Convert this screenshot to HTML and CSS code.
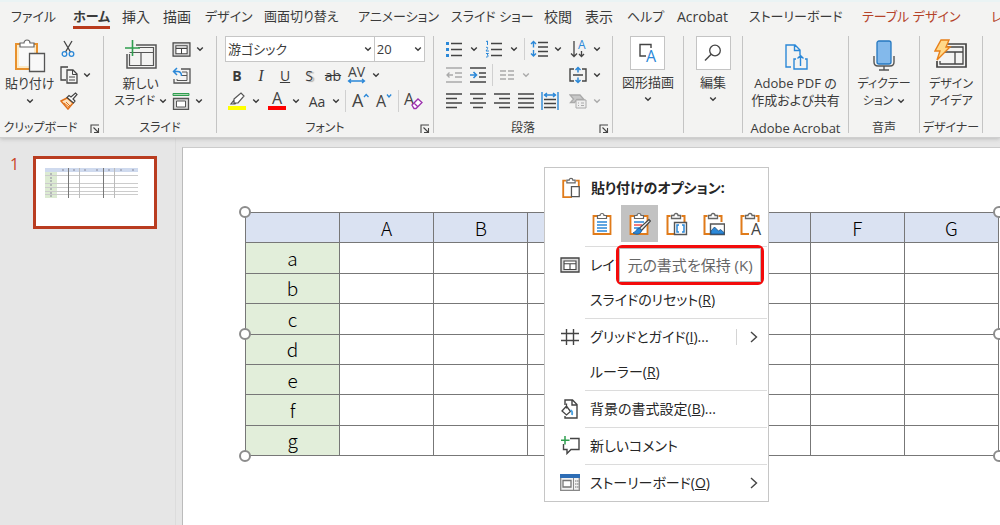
FILE: index.html
```html
<!DOCTYPE html>
<html lang="ja">
<head>
<meta charset="utf-8">
<title>プレゼンテーション</title>
<link rel="stylesheet" href="styles.css">
</head>
<body>
<svg class="defs" aria-hidden="true">
  <symbol id="chev" viewBox="0 0 8 8"><path d="M1.2 2.5 4 5.3 6.8 2.5" fill="none" stroke="currentColor" stroke-width="1.4"/></symbol>
  <symbol id="launch" viewBox="0 0 10 10"><path d="M1 9V1h8M3.500 3.500 8 8M8.500 4v4.500H4" fill="none" stroke="#444" stroke-width="1.100"/></symbol>
  <symbol id="layout" viewBox="0 0 20 16"><path d="M1 1h18v14H1z" fill="#ddd" stroke="#444" stroke-width="1.300"/><path d="M4 4h12v8.500H4zM4 6.800h12M10 6.800v5.700" fill="#fff" stroke="#444" stroke-width="1.100"/></symbol>
  <symbol id="clip" viewBox="0 0 24 24"><path d="M6.500 4H3.500v18h9.500M17.500 4h3v6" fill="none" stroke="#e07b1a" stroke-width="2"/><path d="M7.500 6.500V3.500h2.500a2 2 0 0 1 4 0h2.500v3z" fill="#fff" stroke="#666" stroke-width="1.300"/></symbol>
</svg>

<header class="ribbon">
  <nav class="tabs">
    <button>ファイル</button><button class="active">ホーム</button><button class="kanji">挿入</button><button class="kanji">描画</button><button>デザイン</button><button>画面切り替え</button><button>アニメーション</button><button>スライド ショー</button><button class="kanji">校閲</button><button class="kanji">表示</button><button>ヘルプ</button><button class="kanji">Acrobat</button><button>ストーリーボード</button><button class="context">テーブル デザイン</button><button class="context">レ</button>
  </nav>

  <div class="groups">
    <section class="group">
      <div class="body clipboard">
        <button class="big"><svg width="32" height="34" viewBox="0 0 32 34"><path d="M2 5h21v25H2z" fill="#fdebc8" stroke="#e8912d" stroke-width="2"/><path d="M5 8h15v19H5z" fill="#fafafa"/><path d="M6 8V4h4a3 3 0 0 1 6 0h4v4z" fill="#fff" stroke="#666" stroke-width="1.200"/><path d="M15.500 14.500h15v18h-15z" fill="#f8f8f8" stroke="#555" stroke-width="1.300"/></svg><span>貼り付け</span><svg class="chev"><use href="#chev"/></svg></button>
        <div class="stack">
          <button aria-label="切り取り"><svg width="16" height="18" viewBox="0 0 16 18"><path d="M4 1l6.500 11M12 1 5.500 12" stroke="#444" stroke-width="1.300"/><circle cx="4.500" cy="14" r="2.300" fill="none" stroke="#2b88d8" stroke-width="1.300"/><circle cx="11.500" cy="14" r="2.300" fill="none" stroke="#2b88d8" stroke-width="1.300"/></svg></button>
          <button aria-label="コピー"><svg width="18" height="18" viewBox="0 0 18 18"><path d="M6 14H1V1h7M7 4h6l4 4v9H7z" fill="none" stroke="#444" stroke-width="1.300"/><path d="M12.500 4v4.500H17M9 11h6M9 14h6" fill="none" stroke="#444"/></svg><svg class="chev"><use href="#chev"/></svg></button>
          <button aria-label="書式のコピー"><svg width="18" height="18" viewBox="0 0 18 18"><path d="M1 9l6-3 6 5-5 6z" fill="#fde3c0" stroke="#e0701a" stroke-width="1.500"/><path d="M4 11l5 4M6 10l4 4" stroke="#e0701a"/><path d="M7 5.500l6.500 5.500 1.500-2-2-2L17 2.500 15.500 1 11 5 9 3.500z" fill="#fff" stroke="#444" stroke-width="1.200"/></svg></button>
        </div>
      </div>
      <div class="label">クリップボード<button class="launch" aria-label="クリップボードの詳細"><svg width="10" height="10"><use href="#launch"/></svg></button></div>
    </section>

    <section class="group">
      <div class="body slides">
        <button class="big"><svg width="34" height="34" viewBox="0 0 34 34"><path d="M12 6h20v23H3V15" fill="none" stroke="#555" stroke-width="1.500"/><path d="M14 8.500h15.500v18H5.500V15M5.500 13.500h24M17 13.500v13" fill="none" stroke="#555" stroke-width="1.200"/><path d="M8.500 1v16M1 9h15" stroke="#2f9e4f" stroke-width="1.600"/></svg><span>新しい</span><span class="line kana">スライド<svg class="chev"><use href="#chev"/></svg></span></button>
        <div class="stack">
          <button aria-label="レイアウト"><svg width="19" height="15"><use href="#layout"/></svg><svg class="chev"><use href="#chev"/></svg></button>
          <button aria-label="リセット"><svg width="19" height="17" viewBox="0 0 19 17"><path d="M9 2h9v14H2v-4" fill="none" stroke="#555" stroke-width="1.300"/><path d="M10 5h5v8.500H5V12M9 8.500h6" fill="none" stroke="#555"/><path d="M5 1 1.500 4.500 5 8M2 4.500h3.500c3 0 4 2 4 4.500" fill="none" stroke="#2b88d8" stroke-width="1.500"/></svg></button>
          <button aria-label="セクション"><svg width="18" height="18" viewBox="0 0 18 18"><path d="M1 1.500h16v2H1z" fill="#a8d5b0" stroke="#2f9e4f"/><path d="M1.500 6.500h15v11h-15z" fill="#ddd" stroke="#555" stroke-width="1.300"/><path d="M4.500 9h9v6h-9z" fill="#fff" stroke="#555"/></svg><svg class="chev"><use href="#chev"/></svg></button>
        </div>
      </div>
      <div class="label">スライド</div>
    </section>

    <section class="group">
      <div class="body rows font">
        <div class="combos">
          <label class="combo name"><select aria-label="フォント"><option>游ゴシック</option></select><svg class="chev"><use href="#chev"/></svg></label>
          <label class="combo"><select aria-label="フォント サイズ"><option>20</option></select><svg class="chev"><use href="#chev"/></svg></label>
        </div>
        <div class="row">
          <button class="tool"><b>B</b></button><button class="tool"><i>I</i></button><button class="tool"><u>U</u></button><button class="tool shadow">S</button><button class="tool"><s>ab</s></button>
          <button class="tool" aria-label="文字の間隔"><svg width="20" height="18" viewBox="0 0 20 18"><text class="g14" x="1" y="11">AV</text><path d="M2 15h15M4 13l-2.500 2L4 17M15 13l2.500 2L15 17" fill="none" stroke="#2b88d8" stroke-width="1.300"/></svg></button><button class="drop"><svg class="chev"><use href="#chev"/></svg></button>
        </div>
        <div class="row">
          <button class="tool" aria-label="蛍光ペン"><svg width="20" height="20" viewBox="0 0 20 20"><path d="M1 15h18v4H1z" fill="#ff0"/><path d="M7 8l7-6 3 3-6 7H7zM7 9l-3 4h4l1-1" fill="#fff" stroke="#555" stroke-width="1.200"/></svg></button><button class="drop"><svg class="chev"><use href="#chev"/></svg></button>
          <button class="tool gap" aria-label="フォントの色"><svg width="20" height="20" viewBox="0 0 20 20"><path d="M1 15h18v4H1z" fill="red"/><text class="g16" x="5" y="13">A</text></svg></button><button class="drop"><svg class="chev"><use href="#chev"/></svg></button>
          <button class="tool gap">Aa</button><button class="drop"><svg class="chev"><use href="#chev"/></svg></button>
          <span class="bar"></span>
          <button class="tool" aria-label="拡大"><svg width="19" height="18" viewBox="0 0 19 18"><text class="g18" x="1" y="15">A</text><path d="M13 5l2.200-2.500L17.500 5" fill="none" stroke="#2b88d8" stroke-width="1.300"/></svg></button>
          <button class="tool" aria-label="縮小"><svg width="19" height="18" viewBox="0 0 19 18"><text class="g16" x="1" y="15">A</text><path d="M12 2.500 14 5l2.200-2.500" fill="none" stroke="#2b88d8" stroke-width="1.300"/></svg></button>
          <span class="bar"></span>
          <button class="tool" aria-label="書式のクリア"><svg width="20" height="20" viewBox="0 0 20 20"><text class="g16" x="1" y="14">A</text><path d="M9 14l6-6 4 3.500-6 6H11zM11 12l4 4" fill="#fff" stroke="#9b2fae" stroke-width="1.300"/></svg></button>
        </div>
      </div>
      <div class="label">フォント<button class="launch" aria-label="フォントの詳細"><svg width="10" height="10"><use href="#launch"/></svg></button></div>
    </section>

    <section class="group">
      <div class="body rows para">
        <div class="row">
          <button class="tool" aria-label="箇条書き"><svg width="18" height="18" viewBox="0 0 18 18"><path d="M1 2h3v3H1zM1 8h3v3H1zM1 14h3v3H1z" fill="#2b88d8"/><path d="M6 3.500h11M6 9.500h11M6 15.500h11" stroke="#444" stroke-width="1.400"/></svg></button><button class="drop wide"><svg class="chev"><use href="#chev"/></svg></button>
          <button class="tool" aria-label="段落番号"><svg width="18" height="18" viewBox="0 0 18 18"><path d="M1 1.500 2.500 1v4M1 7.500c2-1 2.500.5 0 3.500h3M1 13.500h2.500L2 15c2 0 1.500 2.500-1 2" fill="none" stroke="#2b88d8"/><path d="M6 3.500h11M6 9.500h11M6 15.500h11" stroke="#444" stroke-width="1.400"/></svg></button><button class="drop wide"><svg class="chev"><use href="#chev"/></svg></button>
          <span class="bar"></span>
          <button class="tool" aria-label="行間"><svg width="19" height="18" viewBox="0 0 19 18"><path d="M3.500 1.500v6M3.500 10v6M1 4l2.500-2.500L6 4M1 13.500 3.500 16 6 13.500" fill="none" stroke="#2b88d8" stroke-width="1.400"/><path d="M8 2.500h10M8 7h10M8 11.500h10M8 16h10" stroke="#444" stroke-width="1.400"/></svg></button><button class="drop"><svg class="chev"><use href="#chev"/></svg></button>
          <span class="fill"></span>
          <button class="tool" aria-label="文字列の方向"><svg width="17" height="19" viewBox="0 0 17 19"><path d="M4 1v15M1 13.500l3 3 3-3M11.500 11v5.500M9 14l2.500 2.500L14 14" fill="none" stroke="#444" stroke-width="1.300"/><text class="g12 blue" x="8" y="9">A</text></svg></button><button class="drop"><svg class="chev"><use href="#chev"/></svg></button>
        </div>
        <div class="row">
          <button class="tool dim" aria-label="インデントを減らす"><svg width="16" height="16" viewBox="0 0 16 16"><path d="M0 1h16M9 6h7M9 10h7M0 15h16M1 8h6M3.500 5.500 1 8l2.500 2.500" fill="none" stroke="currentColor" stroke-width="1.300"/></svg></button>
          <button class="tool" aria-label="インデントを増やす"><svg width="16" height="16" viewBox="0 0 16 16"><path d="M0 1h16M9 6h7M9 10h7M0 15h16" stroke="#444" stroke-width="1.400"/><path d="M0 8h6M3.500 5 6.500 8l-3 3" fill="none" stroke="#2b88d8" stroke-width="1.600"/></svg></button>
          <span class="bar"></span>
          <button class="tool dim" aria-label="段組み"><svg width="14" height="10" viewBox="0 0 14 10"><path d="M0 1h6M0 5h6M0 9h6M8 1h6M8 5h6M8 9h6" stroke="currentColor" stroke-width="1.300"/></svg></button><button class="drop dim"><svg class="chev"><use href="#chev"/></svg></button>
          <span class="fill"></span>
          <button class="tool" aria-label="文字の配置"><svg width="18" height="18" viewBox="0 0 18 18"><path d="M5 3H1v12h4M13 3h4v12h-4M4 9h10" fill="none" stroke="#444" stroke-width="1.400"/><path d="M9 1.500v5M6.500 4 9 1.500 11.500 4M9 11.500v5M6.500 14 9 16.500l2.500-2.500" fill="none" stroke="#2b88d8" stroke-width="1.500"/></svg></button><button class="drop"><svg class="chev"><use href="#chev"/></svg></button>
        </div>
        <div class="row">
          <button class="tool" aria-label="左揃え"><svg width="16" height="16" viewBox="0 0 16 16"><path d="M0 1h16M0 5.500h11M0 10h16M0 14.500h11" stroke="#444" stroke-width="1.400"/></svg></button>
          <button class="tool" aria-label="中央揃え"><svg width="16" height="16" viewBox="0 0 16 16"><path d="M0 1h16M3 5.500h10M0 10h16M3 14.500h10" stroke="#444" stroke-width="1.400"/></svg></button>
          <button class="tool" aria-label="右揃え"><svg width="16" height="16" viewBox="0 0 16 16"><path d="M0 1h16M5 5.500h11M0 10h16M5 14.500h11" stroke="#444" stroke-width="1.400"/></svg></button>
          <button class="tool" aria-label="両端揃え"><svg width="16" height="16" viewBox="0 0 16 16"><path d="M0 1h16M0 5.500h16M0 10h16M0 14.500h16" stroke="#444" stroke-width="1.400"/></svg></button>
          <button class="tool" aria-label="均等割り付け"><svg width="18" height="18" viewBox="0 0 18 18"><path d="M1 0v18M17 0v18M3 3h12M6 1 3.500 3 6 5M12 1l2.500 2L12 5" fill="none" stroke="#2b88d8" stroke-width="1.400"/><path d="M3 7.500h12M3 11.500h12M3 15.500h12" stroke="#444" stroke-width="1.400"/></svg></button>
          <span class="fill"></span>
          <button class="tool dim" aria-label="SmartArt に変換"><svg width="18" height="15" viewBox="0 0 18 15"><path d="M1 1h10l4 4.500H8L5.500 8.500H1.500L4.500 5z" fill="#c8c8c8" stroke="currentColor" stroke-width="1.300"/><path d="M7 6h10v8H7zM9 9h1M12 9h3M9 11.500h1M12 11.500h3" fill="#eee" stroke="currentColor"/></svg></button><button class="drop dim"><svg class="chev"><use href="#chev"/></svg></button>
        </div>
      </div>
      <div class="label">段落<button class="launch" aria-label="段落の詳細"><svg width="10" height="10"><use href="#launch"/></svg></button></div>
    </section>

    <section class="group">
      <div class="body center"><button class="big"><span class="tile"><svg width="18" height="20" viewBox="0 0 18 20"><path d="M7 13H1V1.500h11V5" fill="none" stroke="#444" stroke-width="1.400"/><text class="g16 blue" x="7" y="19">A</text></svg></span><span>図形描画</span><svg class="chev"><use href="#chev"/></svg></button></div>
    </section>

    <section class="group">
      <div class="body center"><button class="big"><span class="tile"><svg width="18" height="18" viewBox="0 0 18 18"><circle cx="11" cy="6.500" r="5.300" fill="none" stroke="#444" stroke-width="1.300"/><path d="M7.200 10.200 1 16.500" stroke="#444" stroke-width="1.400"/></svg></span><span>編集</span><svg class="chev"><use href="#chev"/></svg></button></div>
    </section>

    <section class="group">
      <div class="body center"><button class="big"><svg width="24" height="34" viewBox="0 0 24 34"><path d="M7 28H2V6h9l5 5v5M10.500 6v5.500H16M12 20h-2v10h13V20h-2M16.500 27v-10M13.500 19.500l3-3 3 3" fill="none" stroke="#2b88d8" stroke-width="1.400"/></svg><span>Adobe PDF の</span><span>作成および共有</span></button></div>
      <div class="label latin">Adobe Acrobat</div>
    </section>

    <section class="group">
      <div class="body center"><button class="big kana"><svg width="24" height="34" viewBox="0 0 24 34"><rect x="5" y="2" width="14" height="23" rx="2" fill="#83b9eb" stroke="#2477c0" stroke-width="1.300"/><path d="M2 17v6q0 4 4 4h12q4 0 4-4v-6M12 27v4M7 31h10" fill="none" stroke="#555" stroke-width="1.400"/></svg><span>ディクテー</span><span class="line">ション<svg class="chev"><use href="#chev"/></svg></span></button></div>
      <div class="label">音声</div>
    </section>

    <section class="group">
      <div class="body center"><button class="big kana"><svg width="34" height="34" viewBox="0 0 34 34"><path d="M12 5h20v23H3v-6" fill="none" stroke="#444" stroke-width="1.700"/><path d="M13 8h16v17H6v-3M11 13h18M21 13v12" fill="none" stroke="#444" stroke-width="1.300"/><path d="M7 1h8l-3 7h4L3 21l3-9H1z" fill="#ffd98a" stroke="#e8801a" stroke-width="1.400"/></svg><span>デザイン</span><span>アイデア</span></button></div>
      <div class="label">デザイナー</div>
    </section>
    <section class="group last"></section>
  </div>
</header>

<main class="work">
  <aside class="pane">
    <span class="num">1</span>
    <button class="thumb" aria-label="スライド 1"><svg viewBox="0 0 118 67"><path fill="#cfdaee" d="M9 9h93v4H9z"/><path fill="#dcebd2" d="M9 13h12v26H9z"/><path d="M9 16.500h93M9 24.500h93M9 28.500h93M9 32.500h93M9 35.500h93" stroke="#ccc"/><path d="M32.500 9v30M67.500 9v30" stroke="#777"/><path d="M43.500 9v30M78.500 9v30" stroke="#bbb"/><path d="M26 11h2M37 11h2M48 11h2M60 11h2M72 11h2M84 11h2M96 11h2M14 15h2M14 19h2M14 22h2M14 26h2M14 30h2M14 34h2M14 37h2" stroke="#889"/></svg></button>
  </aside>
  <section class="slide">
    <div class="frame">
      <table>
        <tbody>
          <tr class="cols"><th></th><th>A</th><th>B</th><th>C</th><th>D</th><th>E</th><th>F</th><th>G</th></tr>
          <tr><th>a</th><td></td><td></td><td></td><td></td><td></td><td></td><td></td></tr>
          <tr><th>b</th><td></td><td></td><td></td><td></td><td></td><td></td><td></td></tr>
          <tr><th>c</th><td></td><td></td><td></td><td></td><td></td><td></td><td></td></tr>
          <tr><th>d</th><td></td><td></td><td></td><td></td><td></td><td></td><td></td></tr>
          <tr><th>e</th><td></td><td></td><td></td><td></td><td></td><td></td><td></td></tr>
          <tr><th>f</th><td></td><td></td><td></td><td></td><td></td><td></td><td></td></tr>
          <tr><th>g</th><td></td><td></td><td></td><td></td><td></td><td></td><td></td></tr>
        </tbody>
      </table>
      <i class="handle tl"></i><i class="handle ml"></i><i class="handle bl"></i>
      <i class="handle tr"></i><i class="handle mr"></i><i class="handle br"></i>
    </div>
  </section>

  <div class="menu" role="menu">
    <div class="head"><svg width="22" height="22" viewBox="0 0 24 24"><use href="#clip" width="24" height="24"/><path d="M12.500 10.500h8.500v11h-8.500z" fill="#fff" stroke="#555" stroke-width="1.400"/></svg>貼り付けのオプション:</div>
    <div class="paste">
      <button aria-label="貼り付け先のテーマを使用"><svg width="24" height="24" viewBox="0 0 24 24"><path d="M3.500 4h17v18h-17z" fill="#fff" stroke="#e07b1a" stroke-width="1.800"/><path d="M7.500 6.500V3.500h2.500a2 2 0 0 1 4 0h2.500v3z" fill="#fff" stroke="#666" stroke-width="1.200"/><path d="M7 10h10M7 13h10M7 16h10M7 19h10" stroke="#2b88d8" stroke-width="1.300"/></svg></button>
      <button class="on" aria-label="元の書式を保持"><svg width="24" height="24" viewBox="0 0 24 24"><path d="M3.500 4h17v18h-17z" fill="#fff" stroke="#e07b1a" stroke-width="1.800"/><path d="M7.500 6.500V3.500h2.500a2 2 0 0 1 4 0h2.500v3z" fill="#fff" stroke="#666" stroke-width="1.200"/><path d="M7 10h10M7 16h5" stroke="#2b88d8" stroke-width="1.300"/><path d="M7 13h8" stroke="#e33" stroke-width="1.300"/><path d="M22 7.500 12.500 16l2 2.500L23.500 9z" fill="#eee" stroke="#444" stroke-width="1.200"/><path d="M12.500 16c-3 0-3 4-6.500 5 3 2 8 1.500 8.500-2.500z" fill="#2b88d8" stroke="#1c63a5"/></svg></button>
      <button aria-label="埋め込み"><svg width="24" height="24" viewBox="0 0 24 24"><use href="#clip" width="24" height="24"/><path d="M10.500 10.500h12v12h-12z" fill="#fff" stroke="#555" stroke-width="1.400"/><path d="M15 13h-2v7h2M18 13h2v7h-2" fill="none" stroke="#2b88d8" stroke-width="1.500"/></svg></button>
      <button aria-label="図"><svg width="24" height="24" viewBox="0 0 24 24"><use href="#clip" width="24" height="24"/><path d="M9.500 12h14v10.500h-14z" fill="#fff" stroke="#555" stroke-width="1.400"/><path d="M10 22v-3l3.500-4 4 4 2-1.500 3.500 3V22z" fill="#2b88d8" stroke="#1c4f80" stroke-width=".8"/></svg></button>
      <button aria-label="テキストのみ保持"><svg width="24" height="24" viewBox="0 0 24 24"><use href="#clip" width="24" height="24"/><path d="M11 10h12v13H11z" fill="#fff"/><text class="g16" x="13" y="23">A</text></svg></button>
    </div>
    <hr>
    <button class="item"><svg width="20" height="16"><use href="#layout"/></svg><span>レイア</span></button>
    <button class="item"><i></i><span>スライドのリセット(<u>R</u>)</span></button>
    <hr>
    <button class="item"><svg width="18" height="18" viewBox="0 0 18 18"><path d="M5.500 1v16M12.500 1v16M0 5.500h18M0 12.500h18" stroke="#444" stroke-width="1.400"/></svg><span>グリッドとガイド(<u>I</u>)...</span><em class="split"><svg width="8" height="12" viewBox="0 0 8 12"><path d="M1 1l5.500 5L1 11" fill="none" stroke="#444" stroke-width="1.400"/></svg></em></button>
    <button class="item"><i></i><span>ルーラー(<u>R</u>)</span></button>
    <hr>
    <button class="item"><svg width="18" height="20" viewBox="0 0 18 20"><path d="M4 6V1h7.500L16 5.500V19H4v-2M11 1v5h5" fill="none" stroke="#444" stroke-width="1.400"/><path d="M1 12l4.500-5 4 5.500-4 3.500zM5.500 4.500v5" fill="#fff" stroke="#444" stroke-width="1.300"/><path d="M9.500 11c2 1 2 3 1.500 5" fill="none" stroke="#4ba3e3" stroke-width="1.800"/></svg><span>背景の書式設定(<u>B</u>)...</span></button>
    <hr>
    <button class="item"><svg width="19" height="19" viewBox="0 0 19 19"><path d="M9 2.500h9v11h-8L6 17.500v-4H2.500V8" fill="none" stroke="#444" stroke-width="1.400"/><path d="M4 0v8.500M0 4.300h8.500" stroke="#2f9e4f" stroke-width="1.500"/></svg><span>新しいコメント</span></button>
    <hr>
    <button class="item"><svg width="20" height="17" viewBox="0 0 20 17"><path d="M.7.700h18.600v15.600H.7z" fill="#f2f2f2" stroke="#888" stroke-width="1.300"/><path d="M0 0h20v4H0z" fill="#2d6db5"/><path d="M3 6.500h8v6.500H3z" fill="#fff" stroke="#777" stroke-width="1.300"/><path d="M13.500 4v12" stroke="#888"/><path d="M15 7h1.500M15 10h1.500M15 13h1.500M17 7h1.500M17 10h1.500M17 13h1.500" stroke="#777"/></svg><span>ストーリーボード(<u>O</u>)</span><em><svg width="8" height="12" viewBox="0 0 8 12"><path d="M1 1l5.500 5L1 11" fill="none" stroke="#444" stroke-width="1.400"/></svg></em></button>
    <div class="tip" role="tooltip"><span>元の書式を保持 (K)</span></div>
  </div>
</main>
</body>
</html>
```
FILE: styles.css
```css
* { box-sizing: border-box; }

body {
  margin: 0;
  min-height: 100vh;
  display: flex;
  flex-direction: column;
  overflow: hidden;
  background: #e6e6e6;
  color: #3b3b3b;
  font: 13px/17px "Open Sans", "Noto Sans CJK JP", sans-serif;
  font-feature-settings: "palt";
}

button, select {
  margin: 0;
  padding: 0;
  border: 0;
  background: none;
  color: inherit;
  font: inherit;
  font-feature-settings: inherit;
  white-space: nowrap;
}

svg { display: block; flex: none; }
svg text { fill: #444; }
.defs { position: absolute; width: 0; height: 0; }
.chev { width: 8px; height: 8px; }
.g12 { font-size: 12px; }
.g14 { font-size: 14px; }
.g16 { font-size: 16px; }
.g18 { font-size: 18px; }
svg .blue { fill: #2b88d8; }

/* ribbon */
.ribbon {
  position: relative;
  z-index: 1;
  background: #f3f3f2;
  border-top: 2px solid #eaf3f4;
  border-bottom: 1px solid #cfcfcf;
  box-shadow: 0 1px 4px #bbb;
}

.tabs {
  display: grid;
  grid-template-columns: 62fr 49fr 41fr 42fr 59fr 94fr 93fr 93fr 41fr 42fr 50fr 72fr 113fr 129fr 9fr;
  padding-left: 11px;
  overflow: hidden;
}
.tabs button {
  min-width: 0;
  height: 28px;
  justify-self: start;
  font-size: 13px;
}
.tabs .kanji { font-size: 14px; }
.tabs .active { height: 27px; font-weight: bold; border-bottom: 3px solid #b93a1c; padding-top: 4px; }
.tabs .context { color: #b5432a; }

.groups {
  display: grid;
  grid-template-columns: 104fr 113fr 217fr 179fr 71fr 59fr 106fr 71fr 63fr 17fr;
  padding: 6px 0 4px;
}
.group {
  min-width: 0;
  display: flex;
  flex-direction: column;
  border-right: 1px solid #c4c4c4;
}
.body { height: 87px; display: flex; }
.label {
  position: relative;
  font-size: 12px;
  line-height: 10px;
  text-align: center;
  white-space: nowrap;
}
.label.latin { font-size: 13px; }
.launch { position: absolute; right: 3px; top: 1px; }
.clipboard + .label { padding-right: 22px; }
.group.last { border: 0; }

.big {
  display: flex;
  flex-direction: column;
  align-items: center;
  padding-top: 3px;
  font-size: 13px;
}
.kana { font-size: 12px; }
.big > svg:first-child { margin-bottom: 2px; }
.big > .chev { margin-top: 5px; }
.line { display: flex; align-items: center; gap: 4px; }
.center { justify-content: center; }
.center .big { min-width: 0; }
.tile {
  display: grid;
  place-items: center;
  width: 35px;
  height: 34px;
  margin: -3px 0 4px;
  border: 1px solid #c4c4c4;
  background: #fff;
}
.tile ~ .chev { margin-top: 4px; }

.clipboard { padding-left: 5px; gap: 5px; }
.slides { padding-left: 10px; gap: 5px; }
.stack { display: grid; grid-template-rows: repeat(3, 26px); }
.stack button { display: flex; align-items: center; gap: 5px; }

.rows { flex-direction: column; padding: 0 8px; }
.row { height: 26px; display: flex; align-items: center; }
.combos { display: flex; height: 26px; border: 1px solid #c6c6c6; background: #fff; }
.combo { position: relative; flex: 1; display: flex; }
.combo.name { flex: 3; border-right: 1px solid #c6c6c6; }
.combo select { width: 100%; padding-left: 2px; appearance: none; font-size: 13px; outline: 0; }
.combo .chev { position: absolute; right: 2px; top: 8px; }
.tool { width: 24px; height: 24px; display: grid; place-items: center; font-size: 14px; }
.drop { width: 14px; height: 24px; display: grid; place-items: center; }
.drop.wide { width: 16px; }
.gap { margin-left: 2px; }
.font i { font-family: "Liberation Serif", serif; font-size: 16px; }
.shadow { text-shadow: 2px 1px 1px #aaa; }
.dim { color: #aaa; }
.bar { width: 1px; height: 22px; margin: 0 2px; background: #d0d0d0; }
.fill { flex: 1; }

/* workspace */
.work { position: relative; flex: 1; display: flex; }
.pane {
  width: 176px;
  display: flex;
  align-items: flex-start;
  gap: 14px;
  padding: 18px 0 0 10px;
  border-right: 1px solid #dcdcdc;
}
.num { width: 9px; color: #c9452b; font-size: 16px; }
.thumb { width: 124px; height: 73px; border: 3px solid #b93c20; background: #fff; }
.slide {
  flex: 1;
  min-width: 0;
  margin: 9px 0 0 6px;
  padding: 64px 0 0 62px;
  border-top: 1px solid #ccc;
  border-left: 1px solid #bbb;
  background: #fff;
}
.frame { position: relative; margin-right: 1px; }
table {
  width: 100%;
  height: 244px;
  table-layout: fixed;
  border-collapse: collapse;
  color: #000;
  font-family: "Noto Sans CJK JP", sans-serif;
  font-size: 19px;
  line-height: 24px;
}
th, td { height: 30px; padding: 0; border: 1px solid #777; font-weight: 300; }
th { background: #e2eeda; }
.cols th { background: #dae2f2; }

.handle {
  position: absolute;
  width: 12px;
  height: 12px;
  margin: -6px;
  border: 2px solid #8c8c8c;
  border-radius: 50%;
  background: #fff;
}
.tl, .tr { top: 0; }
.ml, .mr { top: 50%; }
.bl, .br { top: 100%; }
.tl, .ml, .bl { left: 0; }
.tr, .mr, .br { left: 100%; }

/* context menu */
.menu {
  position: absolute;
  left: 544px;
  top: 29px;
  width: 225px;
  padding-bottom: 1px;
  border: 1px solid #c6c6c6;
  background: #fff;
  color: #262626;
  font-size: 14px;
  white-space: nowrap;
}
.head {
  height: 37px;
  display: flex;
  align-items: center;
  gap: 9px;
  padding: 2px 0 0 15px;
  font-weight: bold;
}
.paste { display: flex; padding-left: 39px; height: 37px; }
.paste button { width: 37px; display: grid; place-items: center; }
.paste .on { background: #c2c2c2; }
hr { height: 1px; margin: 1px 1px 0 40px; border: 0; background: #dcdcdc; }
.paste + hr { margin-top: 4px; }
.item {
  width: 100%;
  height: 35px;
  display: grid;
  grid-template-columns: 20px 1fr auto;
  align-items: center;
  justify-items: center;
  column-gap: 10px;
  padding: 0 10px 0 15px;
}
.item span { justify-self: start; }
.split { border-left: 1px solid #d4d4d4; padding: 2px 0 2px 13px; }

.tip {
  position: absolute;
  left: 71px;
  top: 77px;
  width: 148px;
  height: 40px;
  border: 3px solid #f30b0b;
  border-radius: 6px;
  background: #fff;
  color: #666;
  font-size: 15px;
}
.tip span {
  display: grid;
  place-items: center;
  height: 100%;
  border: 1px solid #bbb;
}
```
